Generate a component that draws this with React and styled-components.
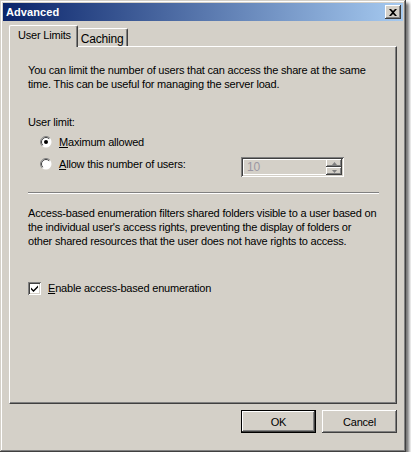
import React from "react";
import styled, { createGlobalStyle } from "styled-components";

const Global = createGlobalStyle`
  html, body { margin: 0; padding: 0; background: #ffffff; }
  body { font-family: "Liberation Sans", Arial, sans-serif; font-size: 11px; color: #000; letter-spacing: -0.2px; }
  * { box-sizing: border-box; }
`;

const Window = styled.div`
  width: 406px;
  height: 452px;
  background: #d4d0c8;
  display: flex;
  flex-direction: column;
  padding: 3px;
  box-shadow:
    inset -1px -1px 0 #404040,
    inset 1px 1px 0 #d4d0c8,
    inset -2px -2px 0 #808080,
    inset 2px 2px 0 #ffffff,
    3px 3px 3px rgba(0, 0, 0, 0.55);
`;

const TitleBar = styled.div`
  height: 18px;
  display: flex;
  align-items: center;
  justify-content: space-between;
  padding: 0 2px 0 3px;
  background: linear-gradient(to right, #0a246a, #a6caf0);
  color: #fff;
  font-weight: bold;
  font-size: 11px;
  letter-spacing: 0.1px;
`;

const CloseButton = styled.div`
  width: 16px;
  height: 14px;
  background: #d4d0c8;
  display: flex;
  align-items: center;
  justify-content: center;
  box-shadow:
    inset -1px -1px 0 #404040,
    inset 1px 1px 0 #ffffff,
    inset -2px -2px 0 #808080;
`;

const Body = styled.div`
  flex: 1;
  display: flex;
  flex-direction: column;
  padding: 4px 6px 0 6px;
`;

const TabStrip = styled.div`
  display: flex;
  align-items: flex-end;
  height: 21px;
  position: relative;
  z-index: 1;
`;

const Tab = styled.div`
  height: ${(p) => (p.$active ? "22px" : "18px")};
  margin-bottom: ${(p) => (p.$active ? "-1px" : "0")};
  padding: ${(p) => (p.$active ? "0 6px 3px 8px" : "2px 4px 0 3px")};
  display: flex;
  align-items: center;
  background: #d4d0c8;
  border-top: 1px solid #fff;
  border-left: ${(p) => (p.$active ? "1px solid #fff" : "none")};
  border-right: 1px solid #404040;
  box-shadow: inset -1px 0 0 #808080;
  border-radius: 2px 2px 0 0;
  font-size: ${(p) => (p.$active ? "11px" : "12px")};
`;

const Panel = styled.div`
  height: 358px;
  width: 388px;
  border-top: 1px solid #fff;
  border-left: 1px solid #fff;
  border-right: 1px solid #404040;
  border-bottom: 1px solid #404040;
  box-shadow: inset -1px -1px 0 #808080;
  padding: 16px 17px 0 18px;
  display: flex;
  flex-direction: column;
`;

const Para = styled.p`
  margin: 0;
  line-height: 14px;
  font-size: 11px;
  white-space: nowrap;
`;

const GroupLabel = styled.div`
  margin-top: 24px;
  line-height: 14px;
`;

const OptionRow = styled.div`
  display: flex;
  align-items: center;
  height: 14px;
  margin-top: ${(p) => p.$mt || 0}px;
  padding-left: ${(p) => p.$indent || 0}px;
  gap: 7px;
`;

const OptionLine = styled.div`
  display: flex;
  align-items: flex-start;
  justify-content: space-between;
  margin-top: 8px;
`;

const SpinBox = styled.div`
  width: 103px;
  height: 20px;
  display: flex;
  background: #d4d0c8;
  box-shadow:
    inset 1px 1px 0 #808080,
    inset -1px -1px 0 #ffffff,
    inset 2px 2px 0 #404040,
    inset -2px -2px 0 #d4d0c8;
  padding: 2px;
  margin-right: 35px;
`;

const SpinText = styled.div`
  flex: 1;
  color: #9b97a3;
  font-size: 12px;
  line-height: 14px;
  padding-left: 3px;
  border: 1px solid #fff;
  border-right: none;
`;

const SpinButtons = styled.div`
  width: 16px;
  display: flex;
  flex-direction: column;
`;

const SpinBtn = styled.div`
  flex: 1;
  background: #d4d0c8;
  box-shadow:
    inset -1px -1px 0 #404040,
    inset 1px 1px 0 #ffffff,
    inset -2px -2px 0 #808080;
  display: flex;
  align-items: center;
  justify-content: center;
`;

const Separator = styled.div`
  height: 2px;
  border-top: 1px solid #808080;
  border-bottom: 1px solid #ffffff;
  margin-top: 15px;
`;

const Para2 = styled(Para)`
  margin-top: 12px;
`;

const CheckRow = styled.div`
  display: flex;
  align-items: center;
  gap: 7px;
  margin-top: 33px;
  height: 14px;
`;

const CheckBox = styled.div`
  width: 13px;
  height: 13px;
  background: #fff;
  box-shadow:
    inset 1px 1px 0 #808080,
    inset -1px -1px 0 #ffffff,
    inset 2px 2px 0 #404040,
    inset -2px -2px 0 #d4d0c8;
  display: flex;
  align-items: center;
  justify-content: center;
`;

const Mn = styled.span`
  text-decoration: underline;
  text-underline-offset: 1px;
`;

const ButtonRow = styled.div`
  display: flex;
  justify-content: flex-end;
  gap: 6px;
  margin-top: 6px;
`;

const Button = styled.div`
  width: 75px;
  height: 23px;
  display: flex;
  align-items: center;
  justify-content: center;
  background: #d4d0c8;
  font-size: 11px;
  box-shadow: inset -1px -1px 0 #404040, inset 1px 1px 0 #ffffff, inset -2px -2px 0 #808080;
  border: ${(p) => (p.$default ? "1px solid #000" : "none")};
`;

const Radio = ({ checked }) => (
  <svg width="12" height="12" viewBox="0 0 12 12">
    <circle cx="6" cy="6" r="5.5" fill="#ffffff" />
    <path d="M2.1 9.9 A5.5 5.5 0 0 1 9.9 2.1" stroke="#808080" strokeWidth="1" fill="none" />
    <path d="M2.8 9.2 A4.5 4.5 0 0 1 9.2 2.8" stroke="#404040" strokeWidth="1" fill="none" />
    {checked && <circle cx="6" cy="6" r="2" fill="#000" />}
  </svg>
);

export default function App() {
  return (
    <>
      <Global />
      <Window>
        <TitleBar>
          <span>Advanced</span>
          <CloseButton>
            <svg width="8" height="7" viewBox="0 0 8 7">
              <path d="M0 0h2l2 2 2-2h2L5 3.5 8 7H6L4 5 2 7H0l3-3.5z" fill="#000" />
            </svg>
          </CloseButton>
        </TitleBar>
        <Body>
          <TabStrip>
            <Tab $active>User Limits</Tab>
            <Tab>Caching</Tab>
          </TabStrip>
          <Panel>
            <Para>
              You can limit the number of users that can access the share at the same
              <br />
              time. This can be useful for managing the server load.
            </Para>
            <GroupLabel>User limit:</GroupLabel>
            <OptionRow $mt={6} $indent={12}>
              <Radio checked />
              <span>
                <Mn>M</Mn>aximum allowed
              </span>
            </OptionRow>
            <OptionLine>
              <OptionRow $indent={12}>
                <Radio />
                <span>
                  <Mn>A</Mn>llow this number of users:
                </span>
              </OptionRow>
              <SpinBox>
                <SpinText>10</SpinText>
                <SpinButtons>
                  <SpinBtn>
                    <svg width="5" height="3" viewBox="0 0 5 3">
                      <path d="M2.5 0L5 3H0z" fill="#808080" />
                    </svg>
                  </SpinBtn>
                  <SpinBtn>
                    <svg width="5" height="3" viewBox="0 0 5 3">
                      <path d="M0 0h5L2.5 3z" fill="#808080" />
                    </svg>
                  </SpinBtn>
                </SpinButtons>
              </SpinBox>
            </OptionLine>
            <Separator />
            <Para2>
              Access-based enumeration filters shared folders visible to a user based on
              <br />
              the individual user's access rights, preventing the display of folders or
              <br />
              other shared resources that the user does not have rights to access.
            </Para2>
            <CheckRow>
              <CheckBox>
                <svg width="7" height="7" viewBox="0 0 7 7">
                  <path d="M0 2.5l2.5 2.5L7 0.5V2.5L2.5 7 0 4.5z" fill="#000" />
                </svg>
              </CheckBox>
              <span>
                <Mn>E</Mn>nable access-based enumeration
              </span>
            </CheckRow>
          </Panel>
          <ButtonRow>
            <Button $default>OK</Button>
            <Button>Cancel</Button>
          </ButtonRow>
        </Body>
      </Window>
    </>
  );
}
